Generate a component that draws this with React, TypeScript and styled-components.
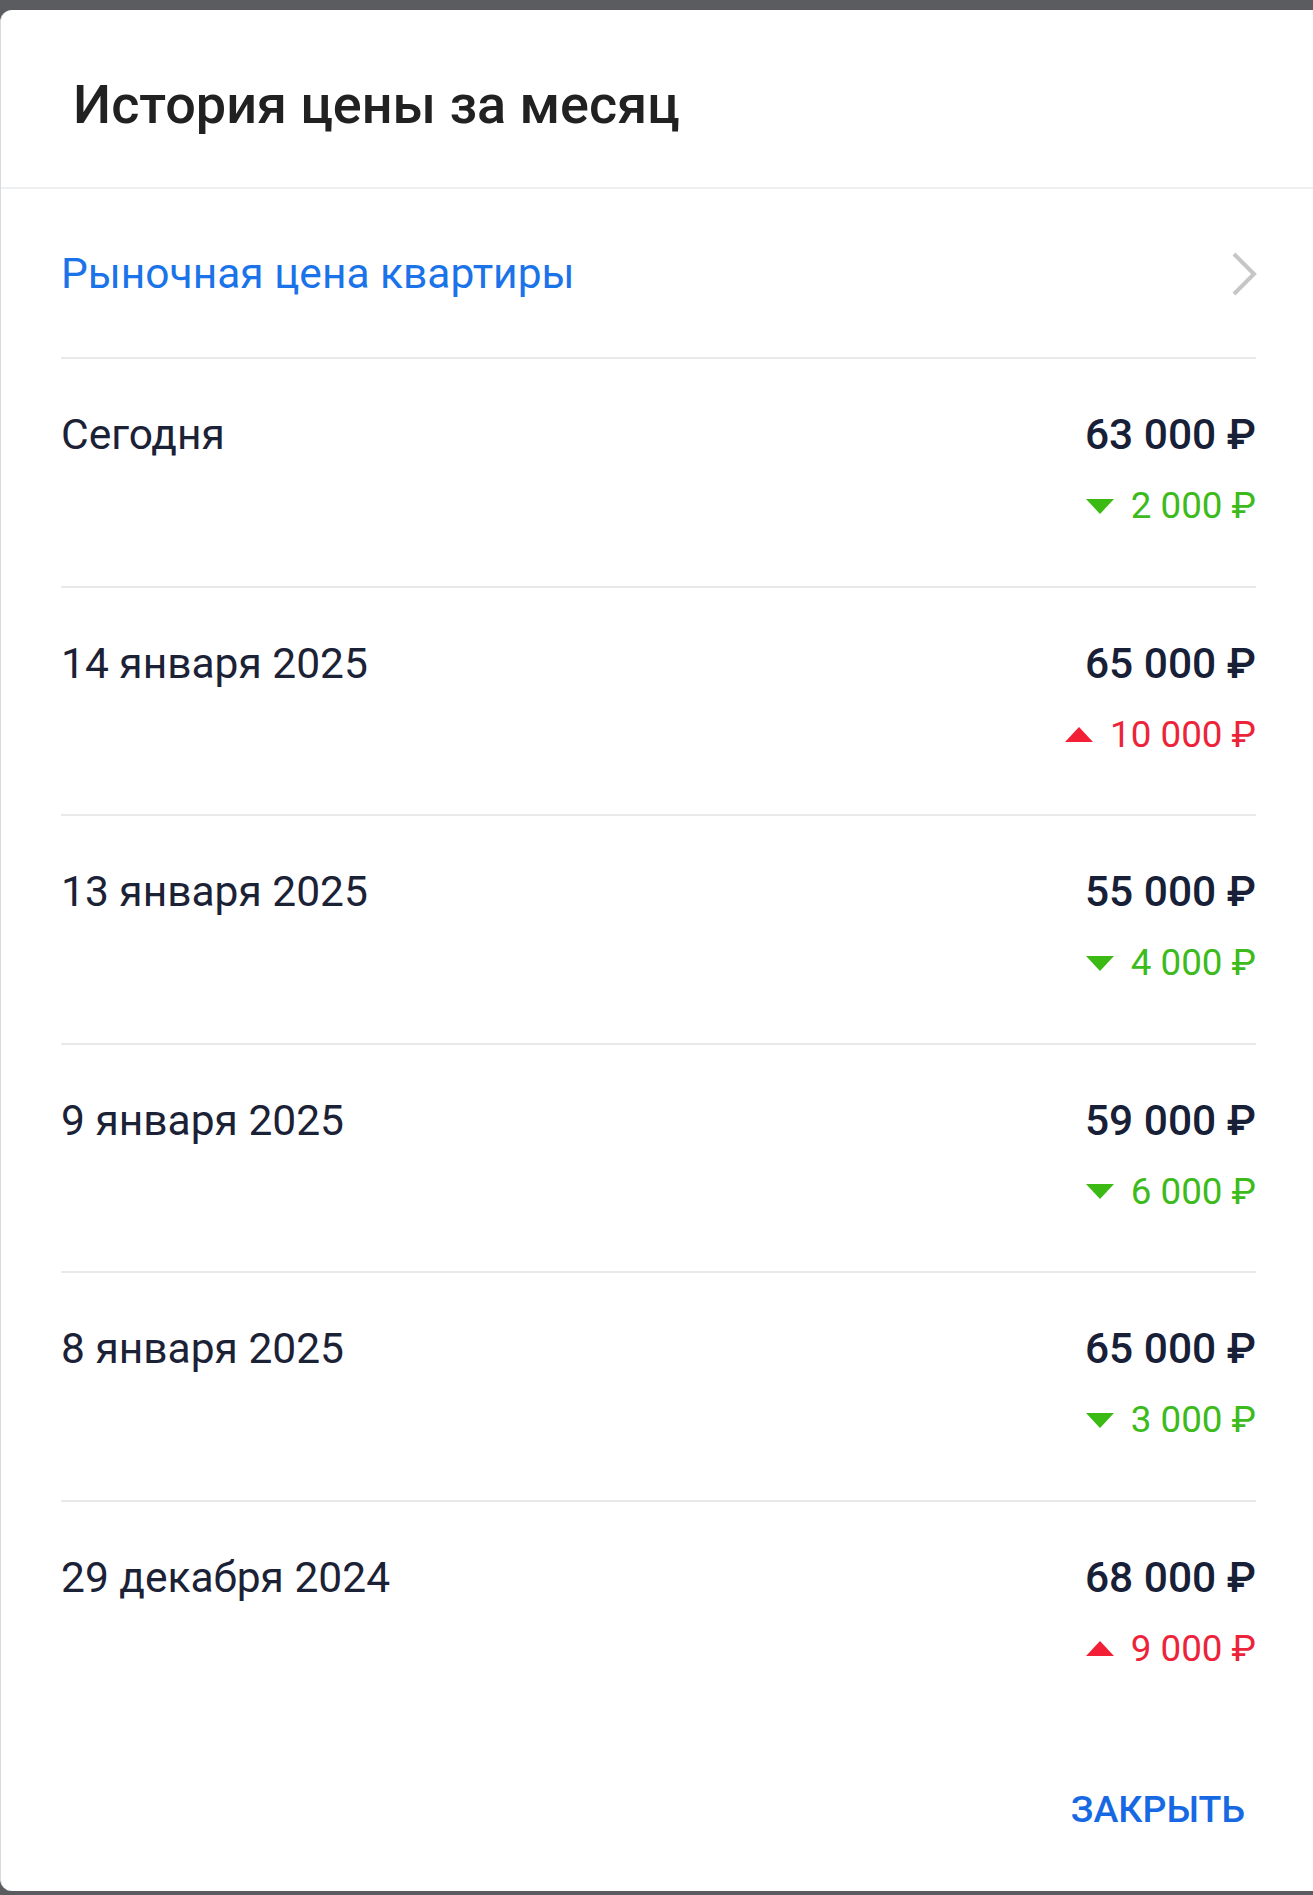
import React from "react";
import styled, { createGlobalStyle } from "styled-components";

const GlobalStyle = createGlobalStyle`
  html, body { margin: 0; padding: 0; }
  body {
    background: #5b5c60;
    font-family: Roboto, "Noto Sans", "Liberation Sans", sans-serif;
    -webkit-font-smoothing: antialiased;
  }
`;

const Screen = styled.div`
  width: 1313px;
  height: 1895px;
  padding-top: 10px;
  padding-bottom: 4px;
  box-sizing: border-box;
  display: flex;
  flex-direction: column;
`;

const Dialog = styled.div`
  flex: 1;
  background: #ffffff;
  border-radius: 12px 0 0 12px;
  border-left: 1px solid #d7dbe0;
  display: flex;
  flex-direction: column;
`;

const Header = styled.div`
  padding: 63px 0 51px 72px;
  border-bottom: 2px solid #eeeff1;
`;

const Title = styled.h1`
  margin: 0;
  font-size: 54px;
  line-height: 63px;
  font-weight: 500;
  color: #212121;
`;

const Body = styled.div`
  padding: 0 57px 0 60px;
  display: flex;
  flex-direction: column;
`;

const LinkRow = styled.div`
  display: flex;
  align-items: center;
  justify-content: space-between;
  padding: 61px 0 59px;
`;

const LinkText = styled.span`
  font-size: 42.5px;
  line-height: 48px;
  color: #1a73e8;
`;

const PriceRow = styled.div`
  display: flex;
  justify-content: space-between;
  align-items: flex-start;
  padding: 52px 0 57.5px;
  border-top: 2px solid #e8e9eb;
`;

const DateText = styled.span`
  font-size: 42.5px;
  line-height: 48px;
  color: #1c2236;
`;

const PriceCol = styled.div`
  display: flex;
  flex-direction: column;
  align-items: flex-end;
`;

const Price = styled.span`
  font-size: 42.5px;
  line-height: 48px;
  font-weight: 500;
  color: #182038;
  margin-bottom: 25px;
`;

const Change = styled.span<{ $up: boolean }>`
  display: flex;
  align-items: center;
  gap: 17px;
  font-size: 36.75px;
  line-height: 44px;
  color: ${(p) => (p.$up ? "#ec2439" : "#3dba1c")};
`;

const Footer = styled.div`
  display: flex;
  justify-content: flex-end;
  padding: 59px 68px 0 0;
`;

const CloseButton = styled.button`
  border: none;
  background: none;
  padding: 0;
  font-family: inherit;
  font-size: 37.5px;
  line-height: 44px;
  font-weight: 500;
  color: #1769e3;
  cursor: pointer;
`;

const Chevron = () => (
  <svg width="28" height="44" viewBox="0 0 28 44" style={{ marginRight: -2 }}>
    <polyline points="4,2 24,22 4,42" fill="none" stroke="#c6c6c8" strokeWidth="4" />
  </svg>
);

const Triangle = ({ up }: { up: boolean }) => (
  <svg width="28" height="15" viewBox="0 0 28 15">
    {up ? (
      <polygon points="0,15 28,15 14,0" fill="#f21f36" />
    ) : (
      <polygon points="0,0 28,0 14,15" fill="#3cba14" />
    )}
  </svg>
);

const rows = [
  { date: "Сегодня", price: "63 000 ₽", change: "2 000 ₽", up: false },
  { date: "14 января 2025", price: "65 000 ₽", change: "10 000 ₽", up: true },
  { date: "13 января 2025", price: "55 000 ₽", change: "4 000 ₽", up: false },
  { date: "9 января 2025", price: "59 000 ₽", change: "6 000 ₽", up: false },
  { date: "8 января 2025", price: "65 000 ₽", change: "3 000 ₽", up: false },
  { date: "29 декабря 2024", price: "68 000 ₽", change: "9 000 ₽", up: true },
];

export default function App() {
  return (
    <>
      <GlobalStyle />
      <Screen>
        <Dialog>
          <Header>
            <Title>История цены за месяц</Title>
          </Header>
          <Body>
            <LinkRow>
              <LinkText>Рыночная цена квартиры</LinkText>
              <Chevron />
            </LinkRow>
            {rows.map((r) => (
              <PriceRow key={r.date}>
                <DateText>{r.date}</DateText>
                <PriceCol>
                  <Price>{r.price}</Price>
                  <Change $up={r.up}>
                    <Triangle up={r.up} />
                    {r.change}
                  </Change>
                </PriceCol>
              </PriceRow>
            ))}
          </Body>
          <Footer>
            <CloseButton>ЗАКРЫТЬ</CloseButton>
          </Footer>
        </Dialog>
      </Screen>
    </>
  );
}
